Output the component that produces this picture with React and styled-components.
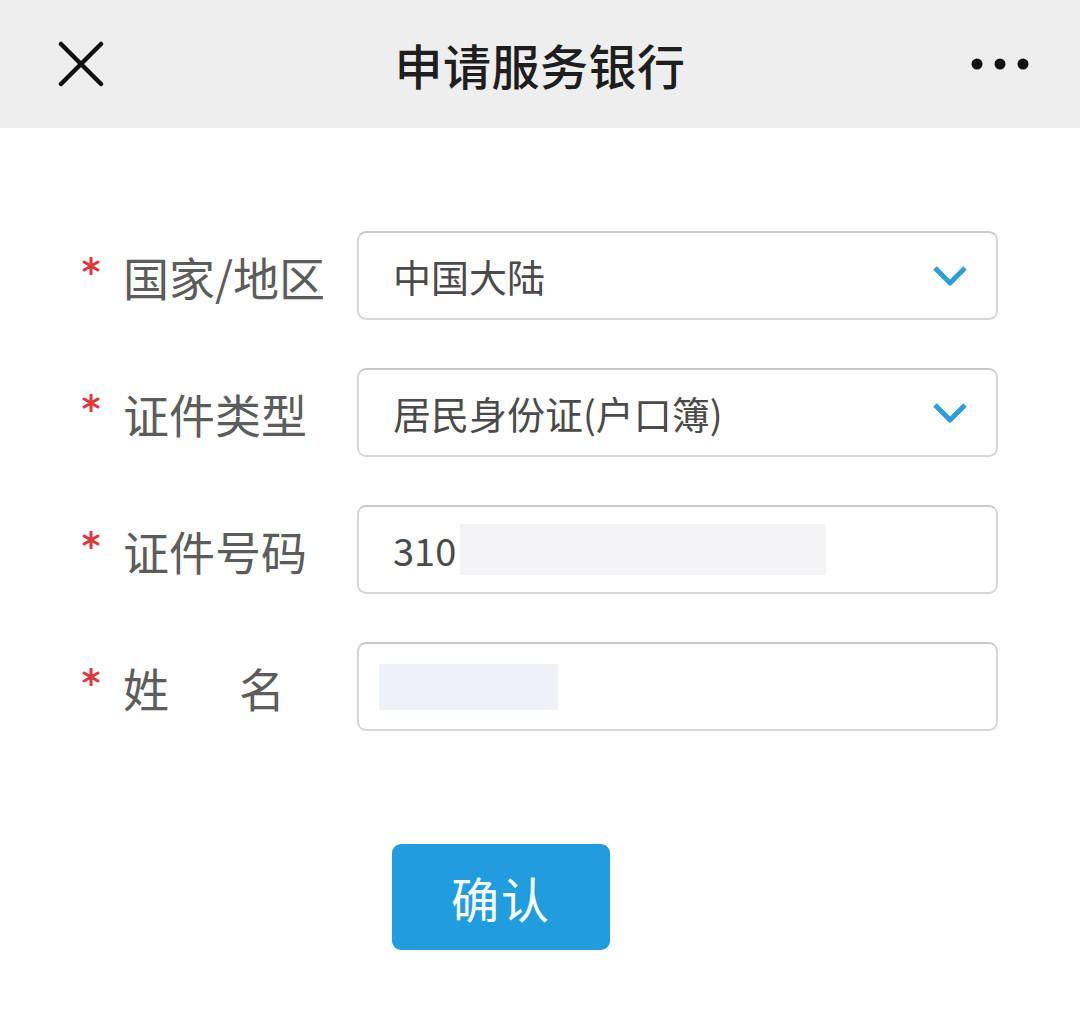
import React from 'react';
import styled, { createGlobalStyle } from 'styled-components';

const GlobalStyle = createGlobalStyle`
  html, body {
    margin: 0;
    padding: 0;
    background: #ffffff;
    font-family: "Noto Sans CJK SC", "Noto Sans", sans-serif;
  }
`;

const Page = styled.div`
  width: 1080px;
  min-height: 1015px;
  background: #fff;
`;

const TopBar = styled.header`
  height: 128px;
  background: #eeeeee;
  display: grid;
  grid-template-columns: 160px 1fr 160px;
  align-items: center;
`;

const BarButton = styled.div`
  display: flex;
  align-items: center;
  justify-content: ${p => (p.$end ? 'flex-end' : 'flex-start')};
  padding: ${p => (p.$end ? '0 50px 0 0' : '0 0 0 58px')};
  height: 100%;
`;

const Title = styled.h1`
  margin: 0;
  text-align: center;
  font-size: 48px;
  font-weight: 500;
  color: #1e1e1e;
  letter-spacing: 0.5px;
`;

const Form = styled.form`
  padding: 103px 0 0 80px;
  display: flex;
  flex-direction: column;
  gap: 48px;
`;

const Row = styled.div`
  display: grid;
  grid-template-columns: 277px 641px;
  align-items: center;
`;

const Label = styled.label`
  display: flex;
  align-items: center;
  white-space: nowrap;
  font-size: 46px;
  color: #5c5c5c;
`;

const LabelText = styled.span`
  letter-spacing: ${p => p.$spread || '0'};
`;

const Star = styled.span`
  flex: none;
  width: 43px;
  display: flex;
  align-items: center;
  padding-left: 2px;
  box-sizing: border-box;
  margin-top: -20px;
`;

const Field = styled.div`
  height: 89px;
  box-sizing: border-box;
  border: 2px solid #d6d6d6;
  border-top-color: #c8c8c8;
  border-radius: 9px;
  display: flex;
  align-items: center;
  padding: 0 28px 0 34px;
  font-size: 38px;
  color: #4a4a4a;
`;

const Value = styled.span`
  flex: 1;
  display: flex;
  align-items: center;
`;

const Mask = styled.span`
  display: inline-block;
  width: ${p => p.$w}px;
  height: ${p => p.$h}px;
  margin-left: ${p => p.$offset || 0}px;
  background: ${p => p.$tint || '#f4f4f6'};
`;

const Actions = styled.div`
  padding: 113px 0 0 392px;
`;

const Confirm = styled.button`
  width: 218px;
  height: 106px;
  border: none;
  border-radius: 9px;
  background: #1f9ddf;
  color: #fff;
  font-family: "Noto Sans CJK SC", sans-serif;
  font-size: 48px;
  letter-spacing: 2px;
`;

const CloseIcon = () => (
  <svg width="46" height="46" viewBox="0 0 46 46">
    <path d="M3 3 L43 43 M43 3 L3 43" stroke="#111" strokeWidth="4.5" strokeLinecap="round" />
  </svg>
);

const MoreIcon = () => (
  <svg width="60" height="14" viewBox="0 0 60 14">
    <circle cx="7" cy="7" r="5.5" fill="#111" />
    <circle cx="30" cy="7" r="5.5" fill="#111" />
    <circle cx="53" cy="7" r="5.5" fill="#111" />
  </svg>
);

// six-armed required marker
const Asterisk = () => (
  <svg width="18" height="18" viewBox="0 0 18 18">
    <path
      d="M9 1 V17 M2.1 5 L15.9 13 M2.1 13 L15.9 5"
      stroke="#e0353b"
      strokeWidth="3"
      strokeLinecap="round"
    />
  </svg>
);

const Chevron = () => (
  <svg width="36" height="24" viewBox="0 0 36 24">
    <path d="M3 4 L18 19 L33 4" fill="none" stroke="#2a9fd9" strokeWidth="5" strokeLinejoin="round" />
  </svg>
);

function Select({ value }) {
  return (
    <Field>
      <Value>{value}</Value>
      <Chevron />
    </Field>
  );
}

function Required({ children, spread }) {
  return (
    <Label>
      <Star><Asterisk /></Star>
      <LabelText $spread={spread}>{children}</LabelText>
    </Label>
  );
}

export default function App() {
  return (
    <Page>
      <GlobalStyle />
      <TopBar>
        <BarButton><CloseIcon /></BarButton>
        <Title>申请服务银行</Title>
        <BarButton $end><MoreIcon /></BarButton>
      </TopBar>

      <Form>
        <Row>
          <Required>国家/地区</Required>
          <Select value="中国大陆" />
        </Row>
        <Row>
          <Required>证件类型</Required>
          <Select value="居民身份证(户口簿)" />
        </Row>
        <Row>
          <Required>证件号码</Required>
          <Field>
            <Value>310<Mask $w={366} $h={51} $offset={4} /></Value>
          </Field>
        </Row>
        <Row>
          <Required spread="70px">姓名</Required>
          <Field>
            <Value><Mask $w={179} $h={46} $offset={-14} $tint="#eef2f8" /></Value>
          </Field>
        </Row>
      </Form>

      <Actions>
        <Confirm type="button">确认</Confirm>
      </Actions>
    </Page>
  );
}
